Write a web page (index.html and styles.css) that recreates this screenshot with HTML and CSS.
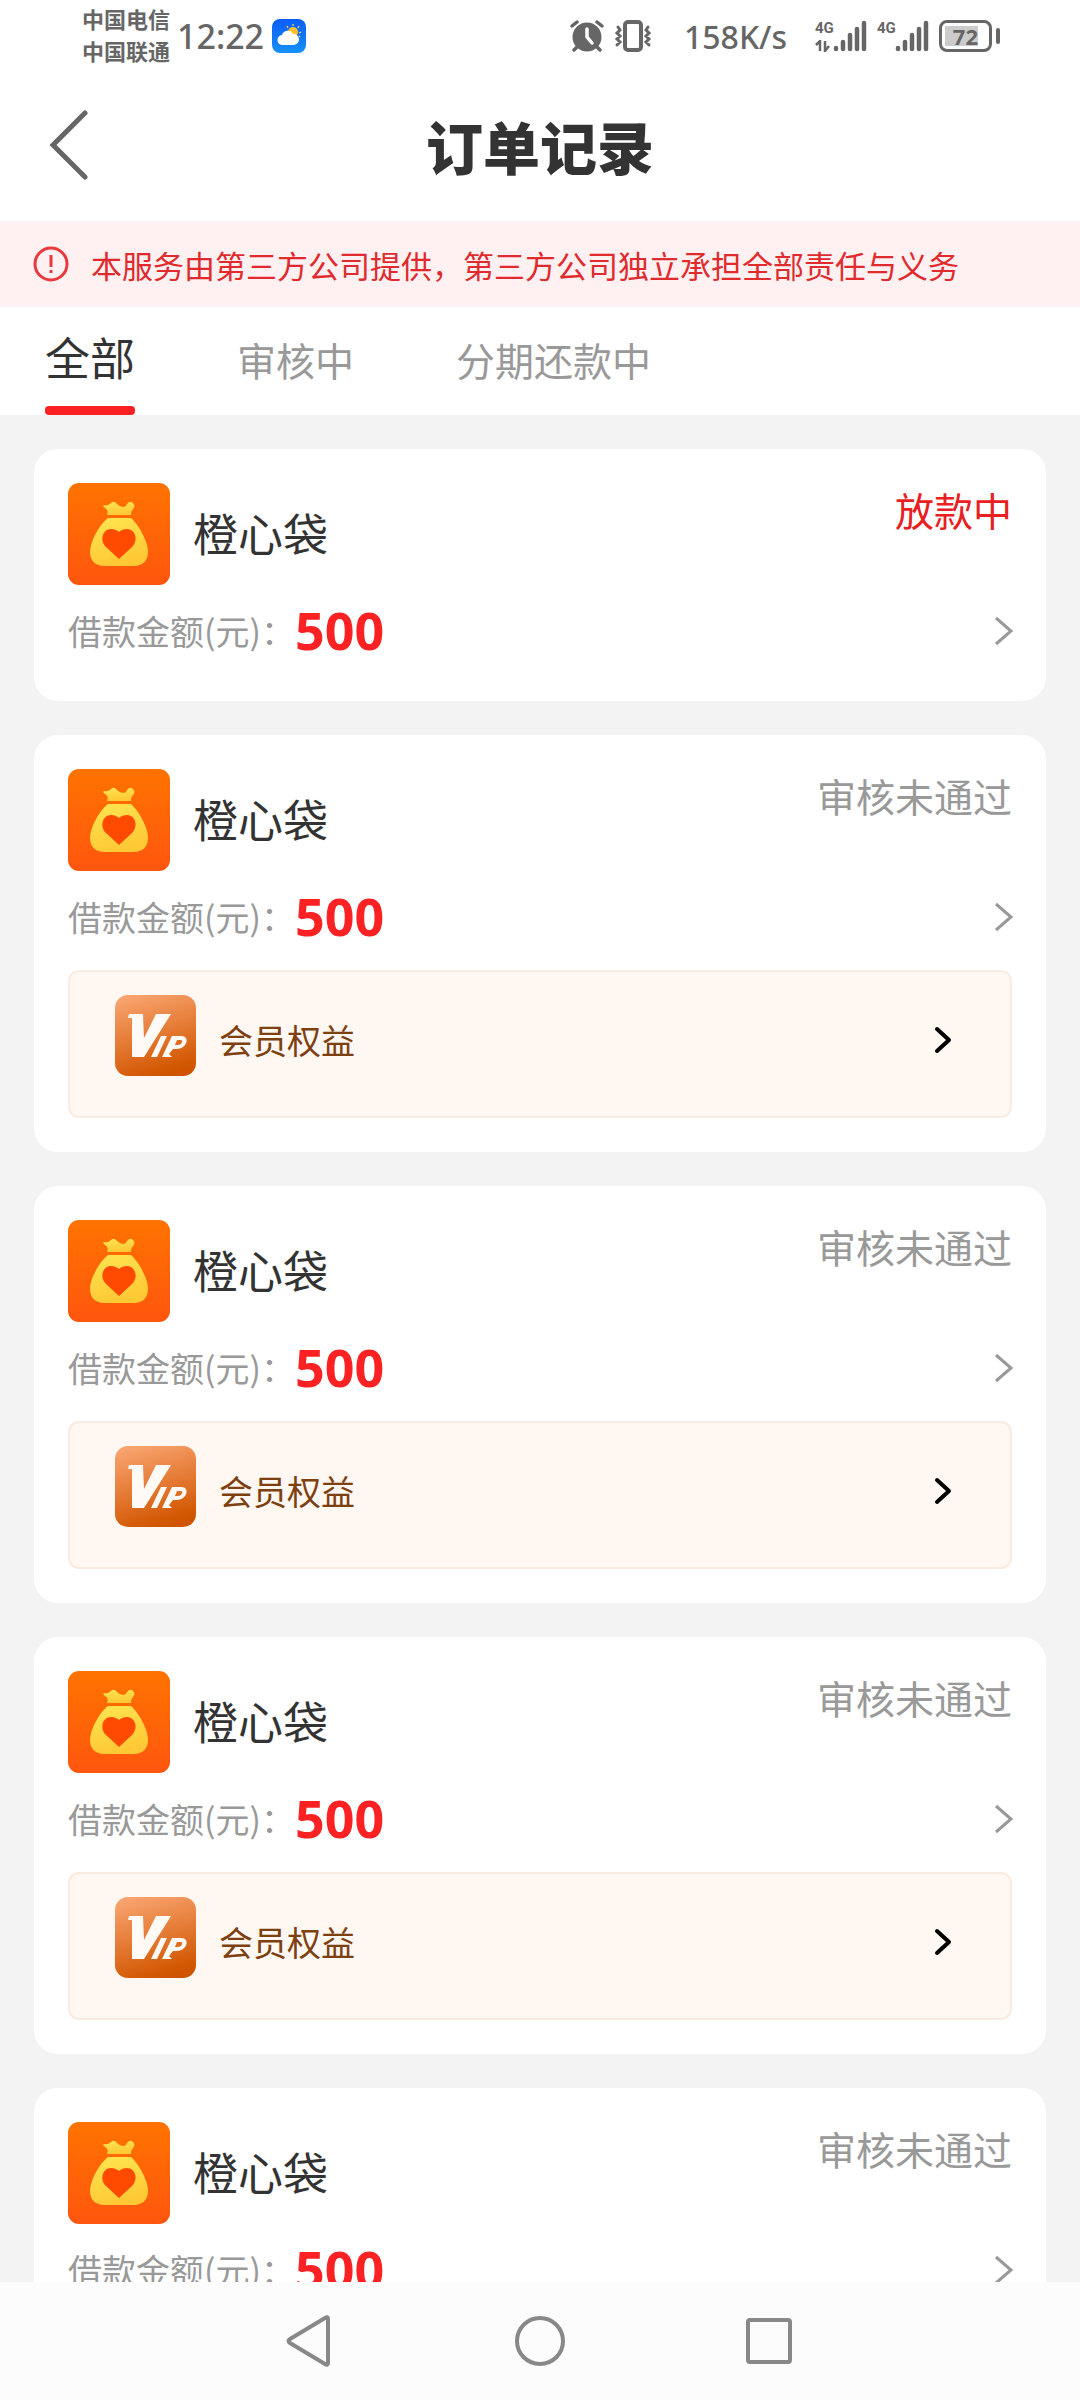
FILE: index.html
```
<!DOCTYPE html>
<html lang="zh-CN">
<head>
  <meta charset="UTF-8">
  <meta name="viewport" content="width=device-width, initial-scale=1.0">
  <title>订单记录</title>
  <link rel="stylesheet" href="styles.css">
</head>
<body>
  <!-- Shared icons -->
  <svg class="sprite" aria-hidden="true">
    <defs>
      <linearGradient id="orange" x1="0" y1="0" x2="0" y2="1">
        <stop offset="0" stop-color="#ff7300"/>
        <stop offset="1" stop-color="#ff560e"/>
      </linearGradient>
      <linearGradient id="gold" x1="0" y1="0" x2="0.3" y2="1">
        <stop offset="0" stop-color="#ffe651"/>
        <stop offset="1" stop-color="#ffc935"/>
      </linearGradient>
      <linearGradient id="bronze" x1="0.3" y1="0" x2="0.6" y2="1">
        <stop offset="0" stop-color="#f8a26d"/>
        <stop offset="0.9" stop-color="#d45a06"/>
        <stop offset="1" stop-color="#d05400"/>
      </linearGradient>
      <linearGradient id="sky" x1="0" y1="0" x2="0" y2="1">
        <stop offset="0" stop-color="#0a5cf5"/>
        <stop offset="1" stop-color="#1590fb"/>
      </linearGradient>
    </defs>
    <symbol id="icon-bag" viewBox="0 0 102 102">
      <rect width="102" height="102" rx="11" fill="url(#orange)"/>
      <path d="M36 22Q40 23 43 20Q46 17 49 21Q52 24 55 24Q58 24 59 21Q62 17 65 20Q68 23 65 26Q63 28 63 32H39Q41 27 37 25Q34 23 36 22Z" fill="url(#gold)"/>
      <path d="M40 35H63C70 41 80 58 80 69C80 78 74 83 66 83H36C28 83 22 78 22 69C22 58 32 41 40 35Z" fill="url(#gold)"/>
      <path d="M51 76L38 64C31 57 35 46 43 46C47 46 50 48 51 49C53 47 56 46 59 46C67 46 71 57 64 64Z" fill="#ff4a00"/>
    </symbol>
    <symbol id="icon-vip" viewBox="0 0 81 81">
      <rect width="81" height="81" rx="13" fill="url(#bronze)"/>
      <path d="M14 19H28L29 43L41 19H56L29 62H17V23H13Z" fill="#fffaf5"/>
      <path d="M46 41H52L42 62H36Z" fill="#fffaf5"/>
      <path d="M57 41H66C72 41 73 46 70 50C67 54 63 54 58 54L54 59L57 62H47ZM62 45L60 50C64 50 66 50 67 47C68 45 66 45 62 45Z" fill="#fffaf5" fill-rule="evenodd"/>
    </symbol>
    <symbol id="icon-chevron" viewBox="0 0 20 32">
      <path d="M2 3L17 16L2 29" fill="none" stroke="currentColor" stroke-width="3"/>
    </symbol>
    <symbol id="icon-arrow" viewBox="0 0 20 32">
      <path d="M4 5L16 16L4 27" fill="none" stroke="currentColor" stroke-width="4" stroke-linecap="round" stroke-linejoin="round"/>
    </symbol>
    <symbol id="icon-signal" viewBox="0 0 34 32">
      <path d="M3 28V29M10 22V29M17 15V29M24 9V29M31 3V29" fill="none" stroke="#666" stroke-width="4.500" stroke-linecap="round"/>
    </symbol>
  </svg>

  <div class="status-bar">
    <div class="carriers">
      <span>中国电信</span>
      <span>中国联通</span>
    </div>
    <span class="clock">12:22</span>
    <svg class="weather" viewBox="0 0 34 34">
      <rect width="34" height="34" rx="8" fill="url(#sky)"/>
      <path d="M21 5V7M15 7L16 9M27 7L26 9M29 13L27 14M28 18L27 17" stroke="#ffd75a" stroke-width="1.2"/>
      <circle cx="21" cy="13" r="5" fill="#ffc02e"/>
      <path d="M11 26A5 5 0 0 1 10 16A6 6 0 0 1 21 15A5.500 5.500 0 0 1 22 26Z" fill="#fff"/>
    </svg>
    <div class="status-right">
      <svg class="alarm" viewBox="0 0 34 34">
        <circle cx="17" cy="18" r="14.500" fill="#666"/>
        <path d="M2 7L7 3M32 7L27 3M7 28L4 31M27 28L30 31" stroke="#666" stroke-width="3.500" stroke-linecap="round"/>
        <path d="M17 10V18L22 24" fill="none" stroke="#fff" stroke-width="3.500" stroke-linecap="round" stroke-linejoin="round"/>
      </svg>
      <svg class="vibrate" viewBox="0 0 38 34">
        <rect x="11" y="3" width="16" height="28" rx="3" fill="none" stroke="#666" stroke-width="4"/>
        <path d="M4 8L6 11L3 14L6 17L3 20L6 23L3 26M34 8L32 11L35 14L32 17L35 20L32 23L35 26" fill="none" stroke="#666" stroke-width="3" stroke-linecap="round"/>
      </svg>
      <span class="speed">158K/s</span>
      <div class="signal">
        <span class="network">4G
          <svg class="traffic" viewBox="0 0 16 12">
            <path d="M1 5L5 1V11M10 1V11L14 6" fill="none" stroke="#666" stroke-width="2.500"/>
          </svg>
        </span>
        <svg class="bars"><use href="#icon-signal"/></svg>
      </div>
      <div class="signal">
        <span class="network">4G</span>
        <svg class="bars"><use href="#icon-signal"/></svg>
      </div>
      <div class="battery"><span class="battery-level">72</span></div>
    </div>
  </div>

  <header class="header">
    <button class="back" type="button" aria-label="返回">
      <svg viewBox="0 0 40 70"><path d="M36 3L4 35L36 67" fill="none" stroke="#666" stroke-width="5" stroke-linecap="round"/></svg>
    </button>
    <h1>订单记录</h1>
  </header>

  <div class="notice">
    <svg viewBox="0 0 36 36">
      <circle cx="18" cy="18" r="16" fill="none" stroke="#e8393c" stroke-width="3"/>
      <path d="M18 9V21M18 24V27" stroke="#e8393c" stroke-width="3"/>
    </svg>
    <span>本服务由第三方公司提供，第三方公司独立承担全部责任与义务</span>
  </div>

  <nav class="tabs">
    <a class="active" href="#all">全部</a>
    <a href="#review">审核中</a>
    <a href="#repay">分期还款中</a>
  </nav>

  <main class="orders">
    <article class="card">
      <div class="card-head">
        <svg class="logo"><use href="#icon-bag"/></svg>
        <h2>橙心袋</h2>
        <span class="state paying">放款中</span>
      </div>
      <div class="amount">
        <span>借款金额(元)：</span>
        <strong>500</strong>
        <svg class="chevron"><use href="#icon-chevron"/></svg>
      </div>
    </article>

    <article class="card">
      <div class="card-head">
        <svg class="logo"><use href="#icon-bag"/></svg>
        <h2>橙心袋</h2>
        <span class="state">审核未通过</span>
      </div>
      <div class="amount">
        <span>借款金额(元)：</span>
        <strong>500</strong>
        <svg class="chevron"><use href="#icon-chevron"/></svg>
      </div>
      <a class="vip" href="#vip">
        <svg class="vip-logo"><use href="#icon-vip"/></svg>
        <span>会员权益</span>
        <svg class="arrow"><use href="#icon-arrow"/></svg>
      </a>
    </article>

    <article class="card">
      <div class="card-head">
        <svg class="logo"><use href="#icon-bag"/></svg>
        <h2>橙心袋</h2>
        <span class="state">审核未通过</span>
      </div>
      <div class="amount">
        <span>借款金额(元)：</span>
        <strong>500</strong>
        <svg class="chevron"><use href="#icon-chevron"/></svg>
      </div>
      <a class="vip" href="#vip">
        <svg class="vip-logo"><use href="#icon-vip"/></svg>
        <span>会员权益</span>
        <svg class="arrow"><use href="#icon-arrow"/></svg>
      </a>
    </article>

    <article class="card">
      <div class="card-head">
        <svg class="logo"><use href="#icon-bag"/></svg>
        <h2>橙心袋</h2>
        <span class="state">审核未通过</span>
      </div>
      <div class="amount">
        <span>借款金额(元)：</span>
        <strong>500</strong>
        <svg class="chevron"><use href="#icon-chevron"/></svg>
      </div>
      <a class="vip" href="#vip">
        <svg class="vip-logo"><use href="#icon-vip"/></svg>
        <span>会员权益</span>
        <svg class="arrow"><use href="#icon-arrow"/></svg>
      </a>
    </article>

    <article class="card">
      <div class="card-head">
        <svg class="logo"><use href="#icon-bag"/></svg>
        <h2>橙心袋</h2>
        <span class="state">审核未通过</span>
      </div>
      <div class="amount">
        <span>借款金额(元)：</span>
        <strong>500</strong>
        <svg class="chevron"><use href="#icon-chevron"/></svg>
      </div>
    </article>
  </main>

  <!-- System navigation -->
  <footer class="system-nav">
    <button type="button" aria-label="后退">
      <svg viewBox="0 0 52 52"><path d="M44 4V48Q44 51 41 49L6 28Q3 26 6 24L41 3Q44 1 44 4Z" fill="none" stroke="#888" stroke-width="4" stroke-linejoin="round"/></svg>
    </button>
    <button type="button" aria-label="主屏幕">
      <svg viewBox="0 0 52 52"><circle cx="26" cy="26" r="23" fill="none" stroke="#888" stroke-width="4"/></svg>
    </button>
    <button type="button" aria-label="最近任务">
      <svg viewBox="0 0 52 52"><rect x="4" y="5" width="42" height="42" rx="2" fill="none" stroke="#888" stroke-width="4"/></svg>
    </button>
  </footer>
</body>
</html>
```

FILE: styles.css
```
* {
  box-sizing: border-box;
}
body {
  display: flex;
  flex-direction: column;
  height: 100vh;
  margin: 0;
  overflow: hidden;
  font-family: "Noto Sans CJK SC", "Noto Sans", sans-serif;
  color: #333;
  background-color: #fff;
}
svg {
  display: block;
  flex: none;
}
button {
  padding: 0;
  border: none;
  background: none;
  cursor: pointer;
}
a {
  color: inherit;
  text-decoration: none;
}
.sprite {
  position: absolute;
  width: 0;
  height: 0;
}

/* Status bar */
.status-bar {
  display: flex;
  align-items: center;
  height: 72px;
  padding: 0 82px;
  color: #666;
  flex: none;
}
.carriers {
  display: flex;
  flex-direction: column;
  padding-bottom: 4px;
  font-size: 22px;
  line-height: 32px;
  font-weight: 700;
}
.clock {
  margin-left: 7px;
  font-family: "Noto Sans", sans-serif;
  font-size: 34px;
  font-weight: 500;
}
.weather {
  width: 34px;
  height: 34px;
  margin-left: 8px;
}
.status-right {
  display: flex;
  align-items: center;
  margin-left: auto;
}
.alarm {
  width: 34px;
  height: 34px;
}
.vibrate {
  width: 38px;
  height: 34px;
  margin-left: 10px;
}
.speed {
  margin: 0 28px 0 32px;
  font-family: "Noto Sans", sans-serif;
  font-size: 32px;
  font-weight: 500;
}
.signal {
  display: flex;
  height: 32px;
  margin-right: 10px;
}
.network {
  width: 18px;
  font-family: "Roboto", sans-serif;
  font-size: 15px;
  font-weight: 700;
  line-height: 16px;
}
.traffic {
  width: 16px;
  height: 12px;
  margin-top: 4px;
}
.bars {
  width: 34px;
  height: 32px;
}
.battery {
  position: relative;
  width: 53px;
  height: 32px;
  margin-right: 6px;
  padding: 3px;
  border: 3px solid #666;
  border-radius: 8px;
}
.battery::after {
  content: "";
  position: absolute;
  top: 5px;
  right: -11px;
  width: 4px;
  height: 16px;
  border-radius: 2px;
  background-color: #666;
}
.battery-level {
  display: block;
  width: 33px;
  height: 20px;
  font-family: "Noto Sans", sans-serif;
  font-size: 22px;
  font-weight: 700;
  line-height: 20px;
  text-align: right;
  background-color: #ccc;
}

/* Header */
.header {
  display: grid;
  grid-template-columns: 40px 1fr 40px;
  align-items: center;
  height: 149px;
  padding: 0 49px 4px;
  flex: none;
}
.back svg {
  width: 40px;
  height: 70px;
}
.header h1 {
  margin: 0;
  font-size: 57px;
  font-weight: 900;
  line-height: 80px;
  text-align: center;
}
.notice {
  display: flex;
  align-items: center;
  gap: 22px;
  height: 86px;
  padding: 0 33px;
  font-size: 31px;
  color: #e02a2d;
  background-color: #fff1f1;
  flex: none;
}
.notice svg {
  width: 36px;
  height: 36px;
}
.tabs {
  display: flex;
  gap: 102px;
  height: 108px;
  padding: 0 45px;
  font-size: 39px;
  line-height: 104px;
  color: #999;
  flex: none;
}
.tabs .active {
  display: flex;
  flex-direction: column;
  font-size: 45px;
  line-height: 99px;
  color: #333;
}
.tabs .active::after {
  content: "";
  height: 9px;
  border-radius: 4px;
  background-color: #fd2022;
}

/* Order list */
.orders {
  display: flex;
  flex-direction: column;
  gap: 34px;
  flex: 1;
  min-height: 0;
  padding: 34px;
  overflow: hidden;
  background-color: #f3f3f3;
}
.card {
  padding: 34px;
  border-radius: 24px;
  background-color: #fff;
  flex: none;
}
.card-head {
  display: flex;
  align-items: center;
}
.logo {
  width: 102px;
  height: 102px;
}
.card h2 {
  margin: 0 0 0 23px;
  padding-bottom: 2px;
  font-size: 45px;
  font-weight: 400;
  line-height: 58px;
}
.state {
  align-self: flex-start;
  margin-left: auto;
  font-size: 39px;
  line-height: 52px;
  color: #999;
}
.state.paying {
  color: #e8201f;
}
.amount {
  display: flex;
  align-items: center;
  height: 72px;
  margin-top: 10px;
  font-size: 34px;
  color: #999;
}
.amount span {
  padding-bottom: 2px;
}
.amount strong {
  padding-bottom: 2px;
  font-family: "Noto Sans", sans-serif;
  font-size: 52px;
  line-height: 68px;
  color: #fc2123;
}
.chevron {
  width: 20px;
  height: 32px;
  margin: 0 -2px 0 auto;
}
.vip {
  display: flex;
  align-items: center;
  min-height: 148px;
  margin-top: 17px;
  padding: 23px 57px 32px 45px;
  border: 2px solid #faebe0;
  border-radius: 11px;
  font-size: 34px;
  line-height: 50px;
  color: #7d4010;
  background-color: #fff7f1;
}
.vip-logo {
  align-self: flex-start;
  width: 81px;
  height: 81px;
}
.vip span {
  margin-left: 23px;
}
.arrow {
  width: 20px;
  height: 32px;
  margin-left: auto;
  color: #000;
}

/* System navigation */
.system-nav {
  display: flex;
  justify-content: center;
  gap: 178px;
  height: 118px;
  background-color: #fcfcfc;
  flex: none;
}
.system-nav svg {
  width: 52px;
  height: 52px;
}
```
